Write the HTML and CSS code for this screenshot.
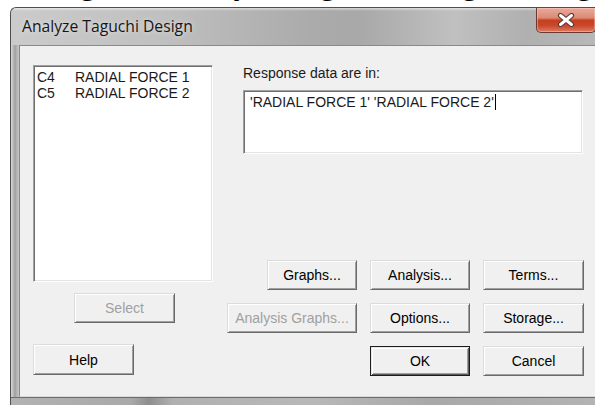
FILE: index.html
```html
<!DOCTYPE html>
<html lang="en">
<head>
<meta charset="utf-8">
<title>Analyze Taguchi Design</title>
<link rel="stylesheet" href="styles.css">
</head>
<body>
<div class="caption"><span class="caption-text">Figure 4 Analyze Taguchi Design Dialog Box</span></div>
<div class="window">
  <div class="titlebar">
    <span class="title">Analyze Taguchi Design</span>
    <button class="close" aria-label="Close">
      <svg width="18" height="14" viewBox="0 0 18 14">
        <path d="M3.5 2.5 L14.5 11.5 M14.5 2.5 L3.5 11.5" stroke="#5a3a36" stroke-width="5.2" stroke-linecap="round" fill="none"/>
        <path d="M3.5 2.5 L14.5 11.5 M14.5 2.5 L3.5 11.5" stroke="#ffffff" stroke-width="3" stroke-linecap="round" fill="none"/>
      </svg>
    </button>
  </div>
  <div class="middle">
    <div class="client">
      <div class="left-col">
        <div class="listbox">
          <div class="item"><span class="colname">C4</span><span>RADIAL FORCE 1</span></div>
          <div class="item"><span class="colname">C5</span><span>RADIAL FORCE 2</span></div>
        </div>
        <button class="btn btn-select" disabled>Select</button>
        <button class="btn btn-help">Help</button>
      </div>
      <div class="right-col">
        <div class="response">
          <label class="response-label">Response data are in:</label>
          <div class="textbox">'RADIAL FORCE 1' 'RADIAL FORCE 2'<span class="caret"></span></div>
        </div>
        <div class="btn-grid">
          <button class="btn btn-graphs">Graphs...</button>
          <button class="btn">Analysis...</button>
          <button class="btn">Terms...</button>
          <button class="btn" disabled>Analysis Graphs...</button>
          <button class="btn">Options...</button>
          <button class="btn">Storage...</button>
          <button class="btn btn-ok">OK</button>
          <button class="btn">Cancel</button>
        </div>
      </div>
    </div>
  </div>
  <div class="frame-bottom"></div>
</div>
</body>
</html>
```

FILE: styles.css
```css
html, body {
  margin: 0;
  padding: 0;
  width: 595px;
  height: 405px;
  overflow: hidden;
  background: #ffffff;
}

/* document caption above the dialog, only its lower edge shows */
.caption {
  height: 7px;
  overflow: hidden;
  position: relative;
}
.caption-text {
  display: block;
  font-family: "Liberation Serif", serif;
  font-size: 33px;
  line-height: 33px;
  height: 33px;
  margin-top: -33px;
  padding-left: 52px;
  white-space: nowrap;
  color: #000;
}

/* window frame */
.window {
  margin-left: 10px;
  width: 600px;
  height: 398px;
  box-sizing: border-box;
  border-top: 1px solid #4e4e4e;
  border-left: 1px solid #4e4e4e;
  border-radius: 6px 0 0 0;
  display: flex;
  flex-direction: column;
  background: linear-gradient(to right, #d6d6d6 0, #bdbdbd 2px, #9f9f9f 4px, #b8b8b8 6px, #c4c4c4 8px);
  overflow: hidden;
}

.titlebar {
  height: 37px;
  flex: none;
  display: flex;
  align-items: flex-start;
  background:
    linear-gradient(to bottom, rgba(255,255,255,0.55) 0, rgba(255,255,255,0) 3px),
    linear-gradient(to right, #cbcbcb 0%, #c0c0c0 25%, #ababab 50%, #a8a8a8 58%, #c0c0c0 74%, #b0b0b0 86%, #b9b9b9 100%);
  border-radius: 5px 0 0 0;
}
.title {
  font-family: "Open Sans", "Liberation Sans", sans-serif;
  font-size: 15.7px;
  line-height: 20px;
  padding: 8px 0 0 11px;
  color: #161616;
  text-shadow: 0 0 5px rgba(255,255,255,0.7);
}
.close {
  margin-left: auto;
  margin-right: 14px;
  width: 60px;
  height: 25px;
  padding: 0;
  box-sizing: border-box;
  border: 1px solid #6a3a32;
  border-top: none;
  border-radius: 0 0 5px 5px;
  background: linear-gradient(to bottom, #e8aa9c 0%, #dc8b76 40%, #c5401f 52%, #c9462a 72%, #dd7c62 100%);
  box-shadow: inset 0 0 0 1px rgba(255,210,200,0.45);
  display: flex;
  align-items: center;
  justify-content: center;
}
.close svg { display: block; }

.middle {
  flex: none;
  display: flex;
  padding-left: 8px;
}

.client {
  flex: 1;
  height: 350px;
  display: flex;
  background: #f0f0f0;
  border-top: 1px solid #8a8a8a;
  border-left: 1px solid #8a8a8a;
  border-bottom: 1px solid #dadada;
  font-family: "Liberation Sans", Arial, sans-serif;
  font-size: 14px;
  color: #000;
}

.frame-bottom {
  flex: 1;
  border-top: 1px solid #6d6d6d;
  background: linear-gradient(to right, #b2b2b2 0%, #a9a9a9 20%, #8e8e8e 23%, #b0b0b0 27%, #b8b8b8 50%, #a8a8a8 70%, #b4b4b4 100%);
}

/* left column: variable list and its buttons */
.left-col {
  display: flex;
  flex-direction: column;
  align-items: flex-start;
  padding: 19px 0 0 13px;
  width: 180px;
}
.listbox {
  width: 180px;
  height: 217px;
  box-sizing: border-box;
  background: #fff;
  border: 1px solid;
  border-color: #a0a0a0 #ffffff #ffffff #a0a0a0;
  box-shadow: inset 1px 1px 0 #6f6f6f, inset -1px -1px 0 #e3e3e3;
  padding: 3px 2px 3px 3px;
}
.item {
  display: flex;
  line-height: 16px;
  color: #1a1a1a;
}
.colname {
  width: 38px;
  flex: none;
}

/* shared button look */
.btn {
  font-family: "Liberation Sans", Arial, sans-serif;
  font-size: 14px;
  color: #000;
  background: #f0f0f0;
  padding: 0;
  margin: 0;
  box-sizing: border-box;
  border: 1px solid;
  border-color: #dcdcdc #696969 #696969 #dcdcdc;
  box-shadow: inset 1px 1px 0 #ffffff, inset -1px -1px 0 #a0a0a0;
  border-radius: 0;
}
.btn:disabled {
  color: #a0a0a0;
}
.btn-select {
  margin: 11px 0 0 41px;
  width: 101px;
  height: 30px;
}
.btn-help {
  margin-top: 21px;
  width: 101px;
  height: 31px;
}

/* right column: response field and command buttons */
.right-col {
  margin-left: 14px;
  padding-top: 19px;
  display: flex;
  flex-direction: column;
}
.response {
  margin-left: 16px;
  display: flex;
  flex-direction: column;
}
.response-label {
  line-height: 16px;
  color: #1a1a1a;
}
.textbox {
  margin-top: 9px;
  width: 340px;
  height: 64px;
  box-sizing: border-box;
  background: #fff;
  border: 1px solid;
  border-color: #a0a0a0 #ffffff #ffffff #a0a0a0;
  box-shadow: inset 1px 1px 0 #6f6f6f, inset -1px -1px 0 #e3e3e3;
  padding: 3px 6px;
  line-height: 16px;
  color: #1a1a1a;
  white-space: nowrap;
}
.caret {
  display: inline-block;
  width: 1px;
  height: 16px;
  background: #000;
  vertical-align: top;
  margin-left: 1px;
}

.btn-grid {
  margin-top: 106px;
  display: grid;
  grid-template-columns: 130px 100px 101px;
  grid-template-rows: 30px 30px 30px;
  column-gap: 13px;
  row-gap: 13px;
}
.btn-graphs {
  justify-self: end;
  width: 90px;
}
.btn-ok {
  grid-column: 2;
  border: 1px solid #1c1c1c;
  box-shadow: inset 1px 1px 0 #e8e8e8, inset -1px -1px 0 #5a5a5a, inset 2px 2px 0 #ffffff, inset -2px -2px 0 #a0a0a0;
}
```
